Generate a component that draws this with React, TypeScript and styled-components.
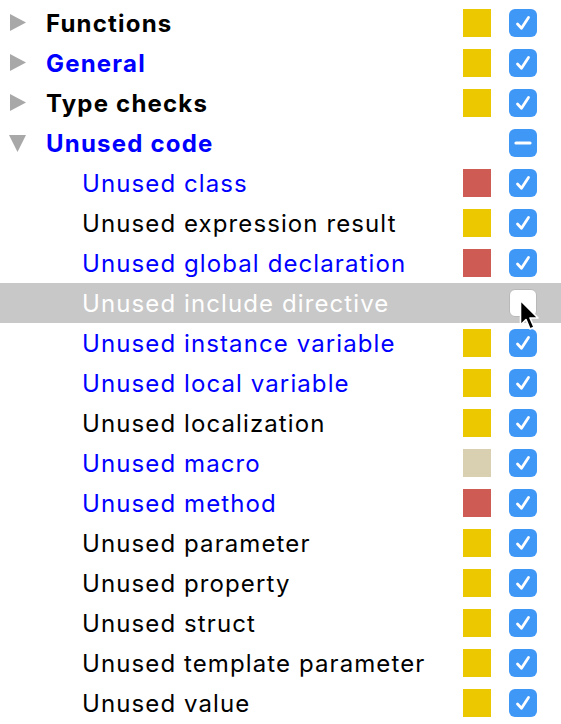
import { FunctionComponent } from "react";
import styled, { createGlobalStyle } from "styled-components";

const GlobalStyle = createGlobalStyle`
    html, body {
        margin: 0;
        padding: 0;
        background: #ffffff;
    }
    body {
        font-family: Inter, "Liberation Sans", Arial, sans-serif;
        -webkit-font-smoothing: antialiased;
    }
`;

type Severity = 'warn' | 'error' | 'weak' | 'none';

interface Inspection {
    label: string;
    blue?: boolean;
    level: 0 | 1;
    expander?: 'closed' | 'open';
    severity: Severity;
    state: 'checked' | 'mixed' | 'unchecked';
    selected?: boolean;
}

const rows: Inspection[] = [
    { label: 'Functions', level: 0, expander: 'closed', severity: 'warn', state: 'checked' },
    { label: 'General', blue: true, level: 0, expander: 'closed', severity: 'warn', state: 'checked' },
    { label: 'Type checks', level: 0, expander: 'closed', severity: 'warn', state: 'checked' },
    { label: 'Unused code', blue: true, level: 0, expander: 'open', severity: 'none', state: 'mixed' },
    { label: 'Unused class', blue: true, level: 1, severity: 'error', state: 'checked' },
    { label: 'Unused expression result', level: 1, severity: 'warn', state: 'checked' },
    { label: 'Unused global declaration', blue: true, level: 1, severity: 'error', state: 'checked' },
    { label: 'Unused include directive', level: 1, severity: 'none', state: 'unchecked', selected: true },
    { label: 'Unused instance variable', blue: true, level: 1, severity: 'warn', state: 'checked' },
    { label: 'Unused local variable', blue: true, level: 1, severity: 'warn', state: 'checked' },
    { label: 'Unused localization', level: 1, severity: 'warn', state: 'checked' },
    { label: 'Unused macro', blue: true, level: 1, severity: 'weak', state: 'checked' },
    { label: 'Unused method', blue: true, level: 1, severity: 'error', state: 'checked' },
    { label: 'Unused parameter', level: 1, severity: 'warn', state: 'checked' },
    { label: 'Unused property', level: 1, severity: 'warn', state: 'checked' },
    { label: 'Unused struct', level: 1, severity: 'warn', state: 'checked' },
    { label: 'Unused template parameter', level: 1, severity: 'warn', state: 'checked' },
    { label: 'Unused value', level: 1, severity: 'warn', state: 'checked' },
];

const severityColors: Record<Severity, string> = {
    warn: '#ecc800',
    error: '#cf5b55',
    weak: '#d9cfb1',
    none: 'transparent',
};

const Tree = styled.div`
    padding-top: 3px;
    width: 561px;
`;

const Row = styled.div<{ $selected?: boolean }>`
    position: relative;
    display: flex;
    align-items: center;
    height: 40px;
    background: ${p => p.$selected ? '#c8c8c8' : 'transparent'};
    z-index: ${p => p.$selected ? 2 : 1};
`;

const Expander = styled.div`
    width: 46px;
    height: 40px;
    display: flex;
    align-items: center;
    padding-left: 9px;
    box-sizing: border-box;
`;

const Label = styled.span<{ $level: number; $blue?: boolean; $selected?: boolean }>`
    flex: 1;
    padding-left: ${p => p.$level === 1 ? 36 : 0}px;
    font-size: 24px;
    font-weight: ${p => p.$level === 0 ? 700 : 400};
    color: ${p => p.$selected ? '#ffffff' : p.$blue ? '#0000ff' : '#000000'};
    white-space: nowrap;
    letter-spacing: ${p => p.$level === 0 ? 1.2 : 1.1}px;
    margin-top: 1px;
`;

const Swatch = styled.div<{ $color: string }>`
    width: 28px;
    height: 28px;
    background: ${p => p.$color};
    margin-right: 18px;
`;

const Check = styled.div<{ $on: boolean }>`
    width: 28px;
    height: 28px;
    border-radius: 6px;
    margin-right: 24px;
    box-sizing: border-box;
    display: flex;
    align-items: center;
    justify-content: center;
    background: ${p => p.$on ? '#3f97f6' : '#ffffff'};
    border: ${p => p.$on ? 'none' : '1px solid #b9b9b9'};
`;

const Cursor = styled.svg`
    position: absolute;
    left: 519px;
    top: 16px;
    pointer-events: none;
`;

const Triangle: FunctionComponent<{ open: boolean }> = ({ open }) => (
    open ? (
        <svg width="18" height="18" viewBox="0 0 18 18">
            <polygon points="0,1 17,1 8.5,18" fill="#a8a8a8" />
        </svg>
    ) : (
        <svg width="18" height="18" viewBox="0 0 18 18">
            <polygon points="1,0 17,8.5 1,17" fill="#a8a8a8" />
        </svg>
    )
);

const CheckMark = () => (
    <svg width="20" height="20" viewBox="0 0 20 20">
        <path d="M4.5 11 L8.5 15.2 L15.5 4.5" fill="none" stroke="#ffffff" strokeWidth="2.8" strokeLinecap="round" strokeLinejoin="round" />
    </svg>
);

const Dash = () => (
    <svg width="20" height="20" viewBox="0 0 20 20">
        <line x1="3" y1="10" x2="17" y2="10" stroke="#ffffff" strokeWidth="3.2" strokeLinecap="round" />
    </svg>
);

const App: FunctionComponent = () => {
    return (
        <>
            <GlobalStyle />
            <Tree>
                {rows.map(r => (
                    <Row key={r.label} $selected={r.selected}>
                        <Expander>
                            {r.expander && <Triangle open={r.expander === 'open'} />}
                        </Expander>
                        <Label $level={r.level} $blue={r.blue} $selected={r.selected}>{r.label}</Label>
                        <Swatch $color={severityColors[r.severity]} />
                        <Check $on={r.state !== 'unchecked'}>
                            {r.state === 'checked' && <CheckMark />}
                            {r.state === 'mixed' && <Dash />}
                        </Check>
                        {r.selected && (
                            <Cursor width="22" height="33" viewBox="0 0 22 33">
                                <path d="M1.5 1.5 L1.5 26 L7 20.5 L11 30 L15 28.3 L11 19 L19 19 Z" fill="#000000" stroke="#ffffff" strokeWidth="1.6" strokeLinejoin="round" />
                            </Cursor>
                        )}
                    </Row>
                ))}
            </Tree>
        </>
    );
}

export default App;
